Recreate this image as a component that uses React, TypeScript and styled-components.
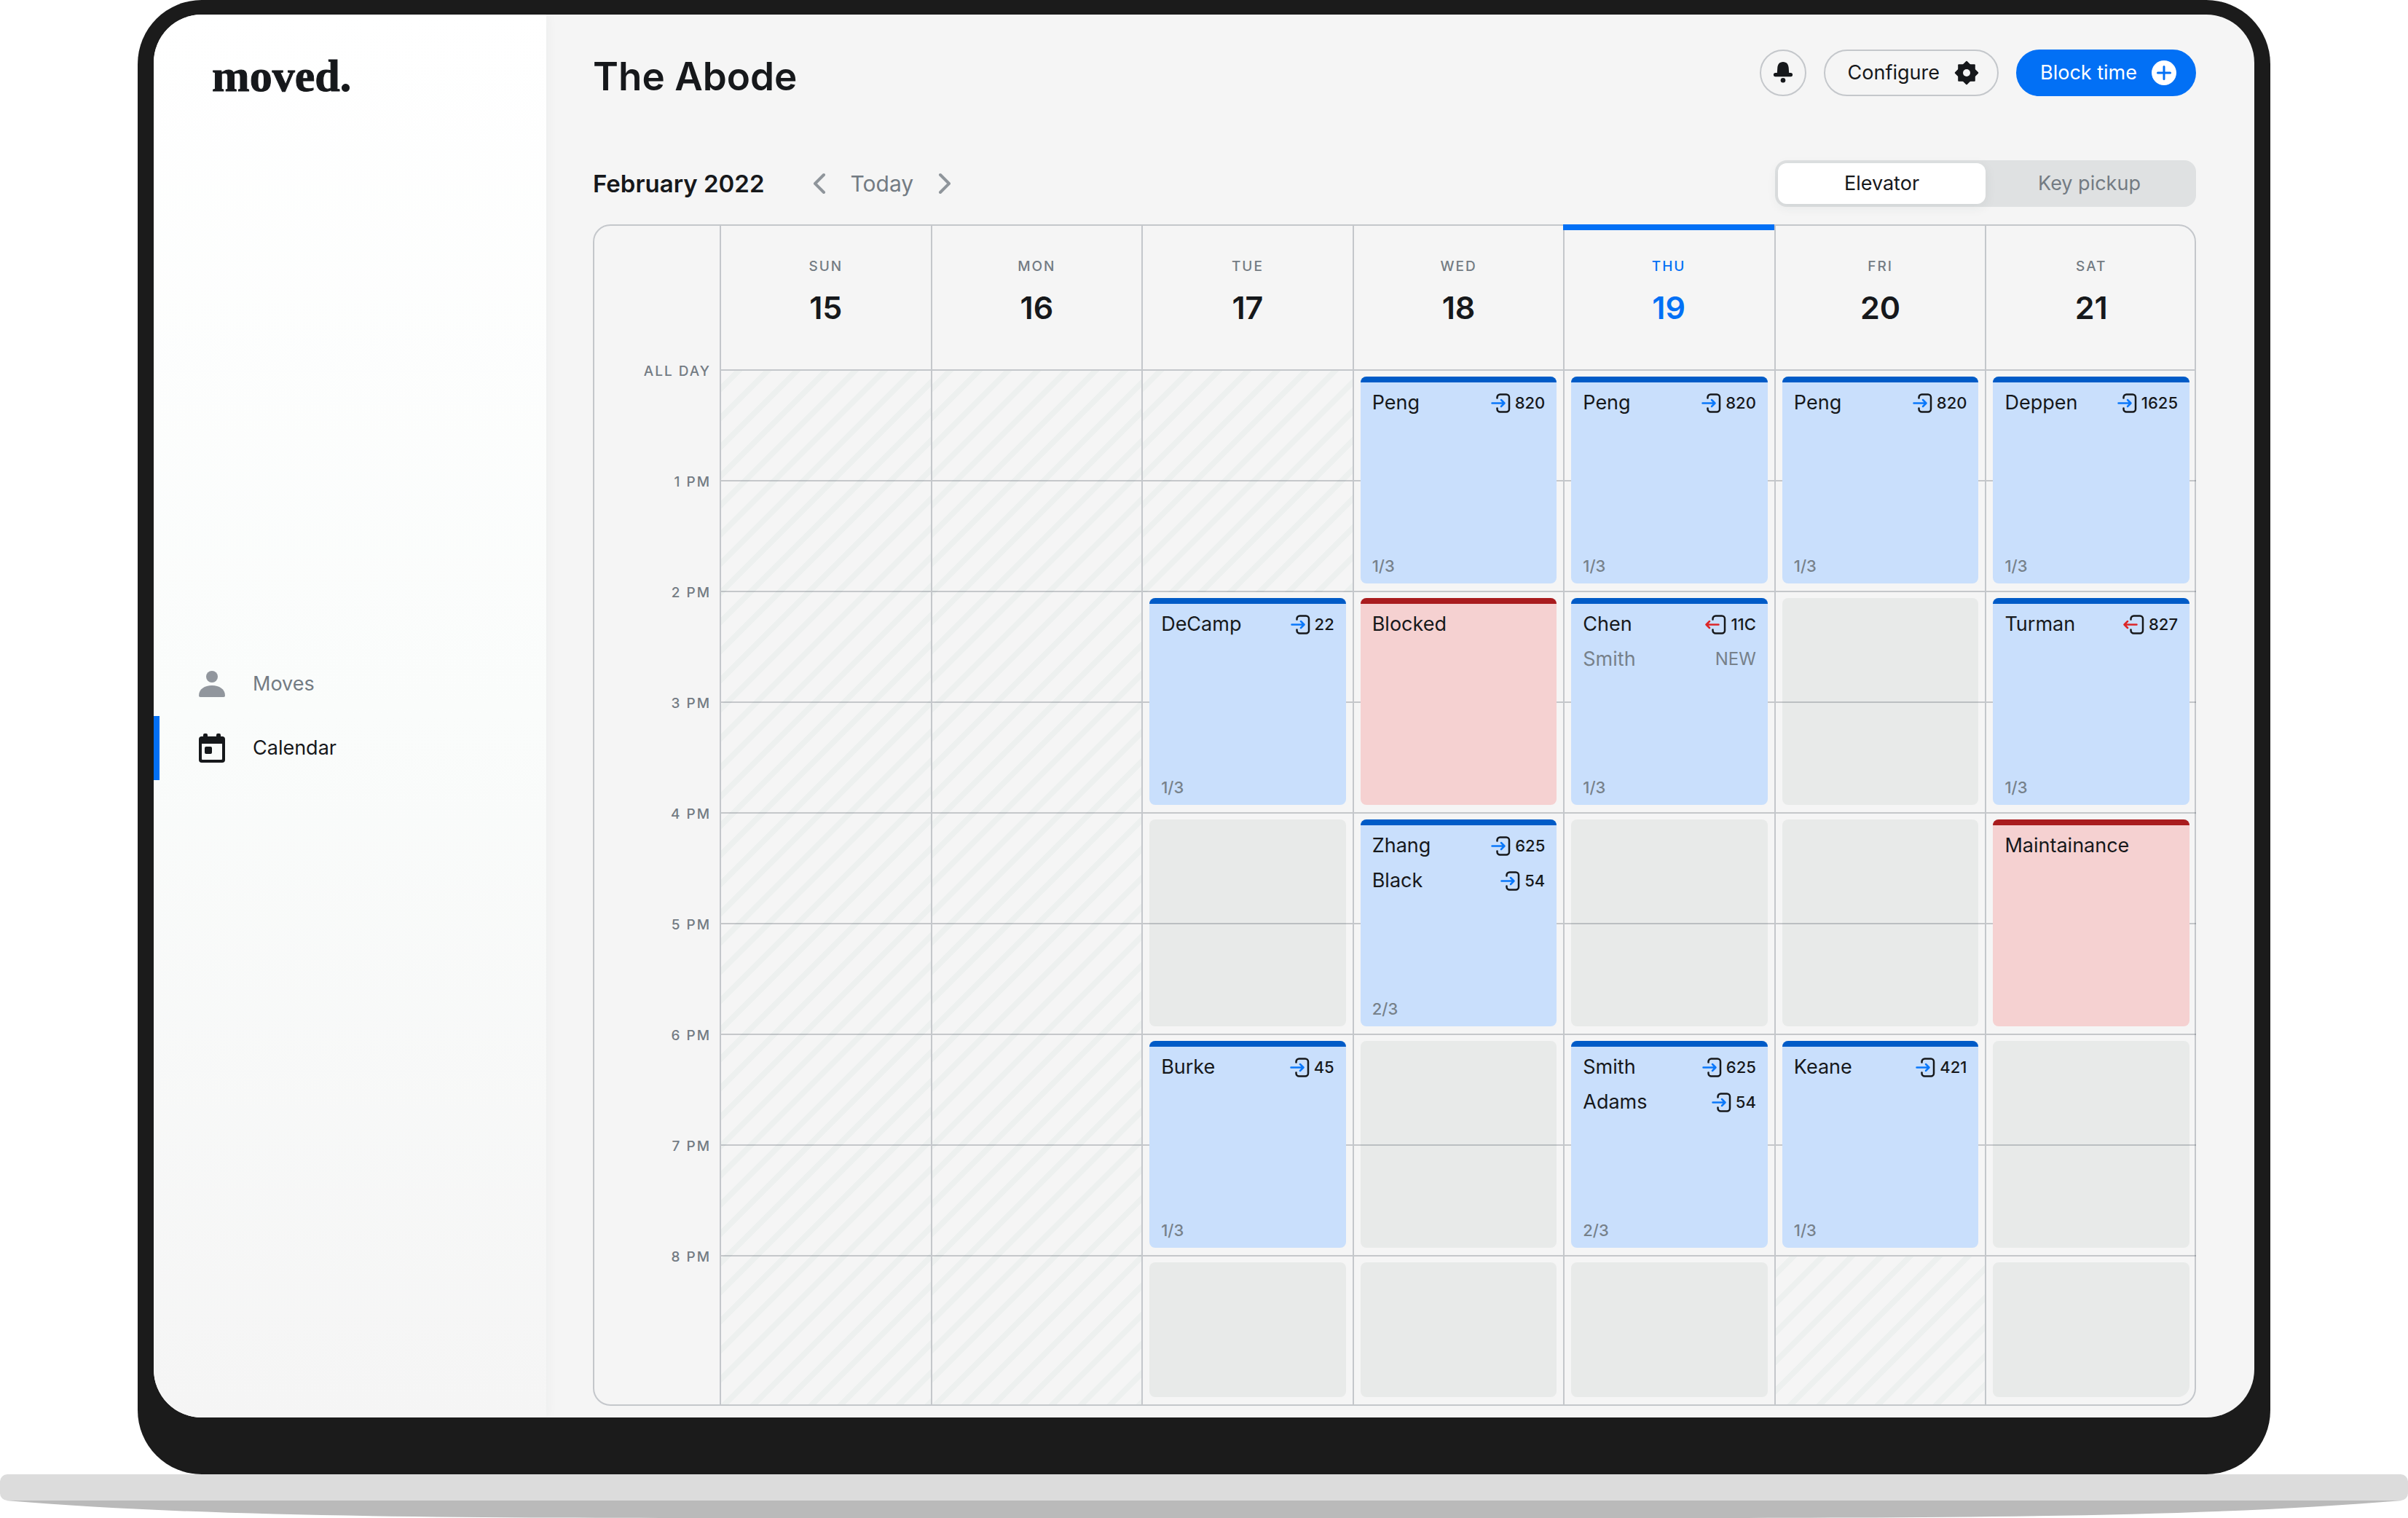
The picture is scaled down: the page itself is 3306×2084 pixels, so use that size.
import React, { useState } from "react";
import styled, { createGlobalStyle, css } from "styled-components";

const ink = "#16181b";
const muted = "#737b83";
const blue = "#0270f5";
const line = "#c4c7cb";
const surface = "#f5f5f5";

const GlobalStyle = createGlobalStyle`
  *, *::before, *::after { box-sizing: border-box; }
  body {
    margin: 0;
    background: #fff;
    color: ${ink};
    font-family: Inter, "Open Sans", sans-serif;
    font-size: 27px;
    line-height: 32px;
  }
  button { font: inherit; color: inherit; background: none; border: 0; padding: 0; cursor: pointer; }
  h1, h2, p { margin: 0; }
  svg { display: block; flex: none; }
`;

/* ---------- Laptop ---------- */

const Lid = styled.div`
  margin: 0 189px;
  padding: 20px 22px 78px;
  background: #1b1b1b;
  border-radius: 88px;
`;

const Screen = styled.div`
  display: grid;
  grid-template-columns: 539px minmax(0, 1fr);
  background: ${surface};
  border-radius: 66px;
  overflow: hidden;
`;

const Deck = styled.div`
  height: 36px;
  background: #dcdcdc;
  border-radius: 10px;
`;

const Underside = styled.svg`
  width: 100%;
  height: 24px;
`;

/* ---------- Sidebar ---------- */

const Sidebar = styled.aside`
  display: grid;
  grid-template-rows: 1fr auto 1fr;
  background: linear-gradient(#fff, #fafcfb 50%, #f5f5f5);
  box-shadow: 0 0 16px rgba(20, 60, 50, 0.05);
`;

const Logo = styled.a`
  justify-self: start;
  align-self: start;
  padding: 50px 0 0 80px;
  font: bold 62px/68px "Liberation Serif", serif;
  color: ${ink};
  text-decoration: none;
  -webkit-text-stroke: 1px ${ink};
`;

const NavItem = styled.a<{ $active?: boolean }>`
  display: flex;
  align-items: center;
  gap: 36px;
  height: 88px;
  padding-left: 52px;
  border-left: 8px solid ${(p) => (p.$active ? blue : "transparent")};
  color: ${(p) => (p.$active ? ink : muted)};
  text-decoration: none;
`;

/* ---------- Header ---------- */

const Main = styled.main`
  padding: 48px 80px 16px 64px;
`;

const Header = styled.header`
  display: flex;
  align-items: center;
  gap: 24px;
  margin-bottom: 88px;
`;

const Title = styled.h1`
  flex: 1;
  padding-top: 10px;
  font-size: 53px;
  line-height: 54px;
  font-weight: 600;
`;

const Pill = styled.button<{ $primary?: boolean }>`
  display: flex;
  align-items: center;
  gap: 20px;
  height: 64px;
  padding: 0 25px 0 31px;
  border: 2px solid ${(p) => (p.$primary ? blue : line)};
  border-radius: 32px;
  background: ${(p) => (p.$primary ? blue : "transparent")};
  color: ${(p) => (p.$primary ? "#fff" : ink)};
`;

const RoundButton = styled.button`
  display: grid;
  place-items: center;
  width: 64px;
  height: 64px;
  border: 2px solid ${line};
  border-radius: 50%;
`;

const Toolbar = styled.div`
  display: flex;
  align-items: center;
  justify-content: space-between;
  margin-bottom: 24px;
`;

const Period = styled.div`
  display: flex;
  align-items: center;
  color: ${muted};
`;

const Month = styled.h2`
  margin-right: 58px;
  font-size: 33px;
  line-height: 40px;
  font-weight: 600;
  color: ${ink};
`;

const Step = styled.button`
  padding: 0 8px;
  color: #8f959b;
`;

const TodayButton = styled.button`
  padding: 0 26px;
  font-size: 30px;
`;

const Segmented = styled.div`
  display: grid;
  grid-template-columns: 1fr 1fr;
  width: 578px;
  height: 64px;
  padding: 4px;
  border-radius: 16px;
  background: #dfe1e2;
`;

const Segment = styled.button<{ $active: boolean }>`
  border-radius: 12px;
  color: ${muted};
  ${(p) =>
    p.$active &&
    css`
      background: #fff;
      color: ${ink};
      box-shadow: 0 4px 16px rgba(40, 70, 60, 0.08);
    `}
`;

/* ---------- Calendar ---------- */

const rows = "repeat(8, 152px) 203px";

const Frame = styled.section`
  border: 2px solid ${line};
  border-radius: 24px;
`;

/* The last column runs under the frame's right border. */
const Week = styled.div`
  display: grid;
  grid-template-columns: 172px repeat(7, minmax(0, 1fr));
  margin-right: -2px;
`;

const Gutter = styled.div`
  display: grid;
  grid-template-rows: 184px ${rows};
`;

const HourLabel = styled.span`
  padding-right: 12px;
  text-align: right;
  font-size: 19px;
  line-height: 32px;
  font-weight: 500;
  letter-spacing: 2px;
  color: ${muted};
`;

const Day = styled.div`
  border-left: 2px solid ${line};
`;

const DayHead = styled.div<{ $today?: boolean }>`
  display: flex;
  flex-direction: column;
  align-items: center;
  height: 199px;
  padding-top: 40px;
  border-bottom: 2px solid ${line};
  color: ${ink};
  ${(p) =>
    p.$today &&
    css`
      margin: -2px 0 0 -2px;
      height: 201px;
      padding-top: 42px;
      background: linear-gradient(${blue} 8px, transparent 8px);
      color: ${blue};
    `}
`;

const Weekday = styled.span<{ $today?: boolean }>`
  font-size: 19px;
  line-height: 32px;
  font-weight: 500;
  letter-spacing: 2px;
  color: ${(p) => (p.$today ? blue : muted)};
`;

const DayNumber = styled.span`
  margin-top: 12px;
  font-size: 43px;
  line-height: 56px;
  font-weight: 600;
`;

const DayBody = styled.div`
  display: grid;
  grid-template-columns: minmax(0, 1fr);
  grid-template-rows: ${rows};
`;

const HourLine = styled.div<{ $row: number }>`
  grid-area: ${(p) => p.$row} / 1;
  border-bottom: 2px solid rgba(45, 55, 68, 0.24);
`;

const Closed = styled.div<{ $row: number; $span: number }>`
  grid-area: ${(p) => p.$row} / 1 / span ${(p) => p.$span};
  background: linear-gradient(
      135deg,
      transparent 23%,
      #edf0ef 23% 37%,
      transparent 37% 73%,
      #edf0ef 73% 87%,
      transparent 87%
    )
    0 0 / 40px 40px;
`;

const Open = styled.div<{ $row: number; $span: number; $corner?: boolean }>`
  grid-area: ${(p) => p.$row} / 1 / span ${(p) => p.$span};
  margin: 8px 9px ${(p) => (p.$span === 1 ? 10 : 12)}px;
  border-radius: 8px;
  border-bottom-right-radius: ${(p) => (p.$corner ? 16 : 8)}px;
  background: #e8eae9;
`;

const Card = styled.article<{ $row: number; $blocked?: boolean }>`
  grid-area: ${(p) => p.$row} / 1 / span 2;
  display: flex;
  flex-direction: column;
  margin: 8px 9px 12px;
  border-radius: 8px;
  overflow: hidden;
  background: ${(p) => (p.$blocked ? "#f5d1d1" : "#c9dffc")};

  &::before {
    content: "";
    height: 8px;
    margin-bottom: 4px;
    background: ${(p) => (p.$blocked ? "#a91c1e" : "#005bc7")};
  }
`;

const Booking = styled.div<{ $pending?: boolean }>`
  display: flex;
  align-items: center;
  justify-content: space-between;
  height: 48px;
  padding: 0 16px;
  color: ${(p) => (p.$pending ? "#77818a" : ink)};
`;

const Unit = styled.span<{ $pending?: boolean }>`
  display: flex;
  align-items: center;
  gap: 6px;
  font-size: ${(p) => (p.$pending ? 24 : 22)}px;
  font-weight: ${(p) => (p.$pending ? 400 : 500)};
`;

const Capacity = styled.p`
  margin-top: auto;
  padding: 0 16px 8px;
  font-size: 22px;
  font-weight: 500;
  color: #77818a;
`;

/* ---------- Icons ---------- */

const PersonIcon = () => (
  <svg width="40" height="40" viewBox="0 0 40 40" fill="#91969d" aria-hidden="true">
    <circle cx="20" cy="10" r="8" />
    <path d="M4 38a2 2 0 0 1-2-2C2 27 10 22 20 22s18 5 18 14a2 2 0 0 1-2 2z" />
  </svg>
);

const CalendarIcon = () => (
  <svg width="40" height="40" viewBox="0 0 40 40" fill={ink} aria-hidden="true">
    <path
      fillRule="evenodd"
      d="M8 4V2a2 2 0 0 1 2-2h2a2 2 0 0 1 2 2v2h12V2a2 2 0 0 1 2-2h2a2 2 0 0 1 2 2v2h2a4 4 0 0 1 4 4v28a4 4 0 0 1-4 4H6a4 4 0 0 1-4-4V8a4 4 0 0 1 4-4zM6 14v21a1 1 0 0 0 1 1h26a1 1 0 0 0 1-1V14z"
    />
    <rect x="10" y="18" width="10" height="10" rx="2" />
  </svg>
);

const BellIcon = () => (
  <svg width="28" height="30" viewBox="0 0 28 30" fill={ink} aria-hidden="true">
    <path d="M14 0c5 0 7.4 3.6 7.7 8l.5 7h2.3a2.6 2.6 0 0 1 0 5.200h-21a2.600 2.600 0 0 1 0-5.200h2.300l.5-7C6.600 3.600 9 0 14 0z" />
    <circle cx="14" cy="25.200" r="3.300" />
  </svg>
);

const GearIcon = () => (
  <svg width="34" height="34" viewBox="0 0 34 34" fill={ink} aria-hidden="true">
    <rect x="5.200" y="5.200" width="23.600" height="23.600" rx="1" />
    <rect x="5.200" y="5.200" width="23.600" height="23.600" rx="1" transform="rotate(45 17 17)" />
    <circle cx="17" cy="17" r="5" fill={surface} />
  </svg>
);

const PlusIcon = () => (
  <svg width="34" height="34" viewBox="0 0 34 34" aria-hidden="true">
    <circle cx="17" cy="17" r="17" fill="#fff" />
    <path d="M17 8.500v17M8.500 17h17" stroke={blue} strokeWidth="3" strokeLinecap="round" />
  </svg>
);

const Chevron = ({ next }: { next?: boolean }) => (
  <svg width="18" height="30" viewBox="0 0 18 30" fill="none" aria-hidden="true">
    <path
      d={next ? "M3 3l12 12L3 27" : "M15 3L3 15l12 12"}
      stroke="currentColor"
      strokeWidth="4"
      strokeLinecap="round"
      strokeLinejoin="round"
    />
  </svg>
);

const MoveInIcon = () => (
  <svg width="27" height="27" viewBox="0 0 27 27" fill="none" strokeLinecap="round" strokeLinejoin="round" role="img" aria-label="Move in">
    <path d="M8.500 6.500V5.500a4 4 0 0 1 4-4h8.500a4 4 0 0 1 4 4v16a4 4 0 0 1-4 4h-8.500a4 4 0 0 1-4-4v-1" stroke={ink} strokeWidth="2.500" />
    <path d="M1.500 13.500H18M14 9l4.500 4.500L14 18" stroke="#0a78fa" strokeWidth="2.500" />
  </svg>
);

const MoveOutIcon = () => (
  <svg width="29" height="27" viewBox="0 0 29 27" fill="none" strokeLinecap="round" strokeLinejoin="round" role="img" aria-label="Move out">
    <path d="M10.500 6.500V5.500a4 4 0 0 1 4-4h8.500a4 4 0 0 1 4 4v16a4 4 0 0 1-4 4h-8.500a4 4 0 0 1-4-4v-1" stroke={ink} strokeWidth="2.500" />
    <path d="M18.500 13.500H1.500M6 9l-4.500 4.500L6 18" stroke="#dc2628" strokeWidth="2.500" />
  </svg>
);

/* ---------- Data ---------- */

type Move = { name: string; unit: string; kind: "in" | "out" | "new" };
type Slot =
  | { type: "closed" | "open"; row: number; span: number; corner?: boolean }
  | { type: "booked"; row: number; moves: Move[]; capacity: string }
  | { type: "blocked"; row: number; label: string };
type DayData = { weekday: string; date: number; today?: boolean; slots: Slot[] };

const closed = (row: number, span: number): Slot => ({ type: "closed", row, span });
const open = (row: number, span = 2, corner = false): Slot => ({ type: "open", row, span, corner });
const blocked = (row: number, label: string): Slot => ({ type: "blocked", row, label });
const booked = (row: number, capacity: string, ...moves: Move[]): Slot => ({ type: "booked", row, capacity, moves });
const move = (name: string, unit: string, kind: Move["kind"] = "in"): Move => ({ name, unit, kind });

const hours = ["ALL DAY", "1 PM", "2 PM", "3 PM", "4 PM", "5 PM", "6 PM", "7 PM", "8 PM"];

const week: DayData[] = [
  { weekday: "SUN", date: 15, slots: [closed(1, 9)] },
  { weekday: "MON", date: 16, slots: [closed(1, 9)] },
  {
    weekday: "TUE",
    date: 17,
    slots: [closed(1, 2), booked(3, "1/3", move("DeCamp", "22")), open(5), booked(7, "1/3", move("Burke", "45")), open(9, 1)],
  },
  {
    weekday: "WED",
    date: 18,
    slots: [
      booked(1, "1/3", move("Peng", "820")),
      blocked(3, "Blocked"),
      booked(5, "2/3", move("Zhang", "625"), move("Black", "54")),
      open(7),
      open(9, 1),
    ],
  },
  {
    weekday: "THU",
    date: 19,
    today: true,
    slots: [
      booked(1, "1/3", move("Peng", "820")),
      booked(3, "1/3", move("Chen", "11C", "out"), move("Smith", "NEW", "new")),
      open(5),
      booked(7, "2/3", move("Smith", "625"), move("Adams", "54")),
      open(9, 1),
    ],
  },
  {
    weekday: "FRI",
    date: 20,
    slots: [booked(1, "1/3", move("Peng", "820")), open(3), open(5), booked(7, "1/3", move("Keane", "421")), closed(9, 1)],
  },
  {
    weekday: "SAT",
    date: 21,
    slots: [
      booked(1, "1/3", move("Deppen", "1625")),
      booked(3, "1/3", move("Turman", "827", "out")),
      blocked(5, "Maintainance"),
      open(7),
      open(9, 1, true),
    ],
  },
];

/* ---------- Views ---------- */

function DayColumn({ day }: { day: DayData }) {
  return (
    <Day>
      <DayHead $today={day.today}>
        <Weekday $today={day.today}>{day.weekday}</Weekday>
        <DayNumber>{day.date}</DayNumber>
      </DayHead>
      <DayBody>
        {day.slots.map((s) => {
          if (s.type === "closed") return <Closed key={s.row} $row={s.row} $span={s.span} />;
          if (s.type === "open") return <Open key={s.row} $row={s.row} $span={s.span} $corner={s.corner} />;
          return null;
        })}
        {hours.slice(1).map((h, i) => (
          <HourLine key={h} $row={i + 1} />
        ))}
        {day.slots.map((s) => {
          if (s.type === "blocked")
            return (
              <Card key={s.row} $row={s.row} $blocked>
                <Booking>{s.label}</Booking>
              </Card>
            );
          if (s.type === "booked")
            return (
              <Card key={s.row} $row={s.row}>
                {s.moves.map((m) => (
                  <Booking key={m.name} $pending={m.kind === "new"}>
                    <span>{m.name}</span>
                    <Unit $pending={m.kind === "new"}>
                      {m.kind === "in" && <MoveInIcon />}
                      {m.kind === "out" && <MoveOutIcon />}
                      {m.unit}
                    </Unit>
                  </Booking>
                ))}
                <Capacity>{s.capacity}</Capacity>
              </Card>
            );
          return null;
        })}
      </DayBody>
    </Day>
  );
}

export default function App() {
  const [view, setView] = useState("Elevator");
  return (
    <>
      <GlobalStyle />
      <Lid>
        <Screen>
          <Sidebar>
            <Logo href="#">moved.</Logo>
            <nav>
              <NavItem href="#moves">
                <PersonIcon />
                Moves
              </NavItem>
              <NavItem href="#calendar" $active aria-current="page">
                <CalendarIcon />
                Calendar
              </NavItem>
            </nav>
          </Sidebar>
          <Main>
            <Header>
              <Title>The Abode</Title>
              <RoundButton aria-label="Notifications">
                <BellIcon />
              </RoundButton>
              <Pill>
                Configure
                <GearIcon />
              </Pill>
              <Pill $primary>
                Block time
                <PlusIcon />
              </Pill>
            </Header>
            <Toolbar>
              <Period>
                <Month>February 2022</Month>
                <Step aria-label="Previous week">
                  <Chevron />
                </Step>
                <TodayButton>Today</TodayButton>
                <Step aria-label="Next week">
                  <Chevron next />
                </Step>
              </Period>
              <Segmented>
                {["Elevator", "Key pickup"].map((name) => (
                  <Segment key={name} $active={view === name} aria-pressed={view === name} onClick={() => setView(name)}>
                    {name}
                  </Segment>
                ))}
              </Segmented>
            </Toolbar>
            <Frame>
              <Week>
                <Gutter>
                  <span />
                  {hours.map((h) => (
                    <HourLabel key={h}>{h}</HourLabel>
                  ))}
                </Gutter>
                {week.map((day) => (
                  <DayColumn key={day.weekday} day={day} />
                ))}
              </Week>
            </Frame>
          </Main>
        </Screen>
      </Lid>
      <Deck />
      <Underside viewBox="0 0 3306 24" preserveAspectRatio="none" aria-hidden="true">
        <path d="M8 0C260 21 560 24 1000 24h1306c440 0 740-3 992-24z" fill="#bababa" />
      </Underside>
    </>
  );
}
